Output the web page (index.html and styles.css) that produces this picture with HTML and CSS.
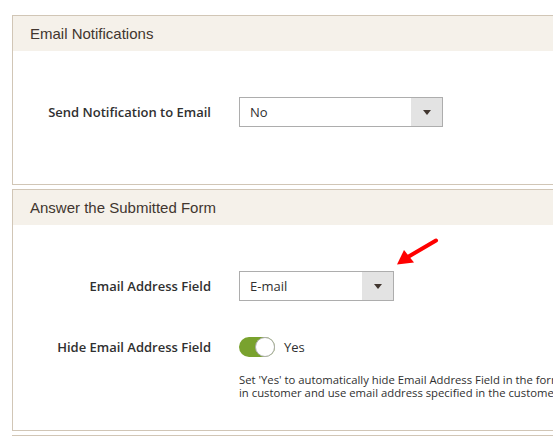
FILE: index.html
```html
<!DOCTYPE html>
<html>
<head>
<meta charset="utf-8">
<link rel="stylesheet" href="styles.css">
</head>
<body>
<div class="page">
  <section class="panel">
    <div class="panel-head">Email Notifications</div>
    <div class="panel-body body-1">
      <div class="row">
        <div class="label">Send Notification to Email</div>
        <div class="control">
          <div class="select wide"><span class="select-value">No</span><span class="select-btn"><span class="caret"></span></span></div>
        </div>
      </div>
    </div>
  </section>
  <section class="panel">
    <div class="panel-head">Answer the Submitted Form</div>
    <div class="panel-body body-2">
      <div class="row">
        <div class="label">Email Address Field</div>
        <div class="control">
          <div class="select narrow"><span class="select-value">E-mail</span><span class="select-btn"><span class="caret"></span></span></div>
        </div>
      </div>
      <div class="row row-toggle">
        <div class="label">Hide Email Address Field</div>
        <div class="control">
          <div class="toggle-wrap"><span class="toggle"><span class="knob"></span></span><span class="toggle-text">Yes</span></div>
        </div>
      </div>
      <div class="row row-note">
        <div class="label"></div>
        <div class="note">Set 'Yes' to automatically hide Email Address Field in the form for logged<br>in customer and use email address specified in the customer account.</div>
      </div>
    </div>
  </section>
  <section class="panel panel-last">
    <div class="panel-head"></div>
  </section>
</div>
<svg class="arrow" width="60" height="40" viewBox="390 230 60 40">
  <line x1="436" y1="240.5" x2="407" y2="257.5" stroke="#ff0000" stroke-width="4" stroke-linecap="round"/>
  <polygon points="397,264.5 404,250 414,262.5" fill="#ff0000"/>
</svg>
</body>
</html>
```
FILE: styles.css
```css
html, body {
  margin: 0;
  padding: 0;
  background: #ffffff;
  overflow: hidden;
}
body {
  width: 553px;
  height: 436px;
  position: relative;
  font-family: "Open Sans", "Liberation Sans", sans-serif;
  color: #303030;
}
.page {
  padding: 15px 0 0 12px;
  width: 760px;
}
.panel {
  border: 1px solid #d1c6b6;
  border-right: none;
  margin-bottom: 4px;
}
.panel-head {
  height: 35px;
  background: #f5f1ea;
  font-family: "Liberation Sans", Arial, sans-serif;
  font-size: 15px;
  line-height: 36px;
  color: #41362f;
  padding-left: 17px;
}
.panel-body {
  background: #fff;
}
.body-1 {
  padding: 46px 0 57px;
}
.body-2 {
  padding: 46px 0 27px;
}
.row {
  display: grid;
  grid-template-columns: 198px auto;
  column-gap: 28px;
  align-items: center;
  min-height: 30px;
}
.row-toggle {
  margin-top: 31px;
}
.row-note {
  margin-top: 11px;
  align-items: start;
}
.label {
  text-align: right;
  font-size: 13px;
  font-weight: 600;
  color: #303030;
  line-height: 30px;
}
.row-toggle .label {
  line-height: 29px;
}
.select {
  box-sizing: border-box;
  height: 30px;
  border: 1px solid #adadad;
  display: flex;
  background: #fff;
}
.select.wide { width: 204px; }
.select.narrow { width: 155px; }
.select-value {
  flex: 1;
  font-size: 13px;
  line-height: 29px;
  padding-left: 10px;
  color: #303030;
}
.select-btn {
  width: 31px;
  background: #e3e3e3;
  display: flex;
  align-items: center;
  justify-content: center;
}
.caret {
  width: 0;
  height: 0;
  border-left: 4.5px solid transparent;
  border-right: 4.5px solid transparent;
  border-top: 5px solid #41362f;
  margin-top: 1px;
}
.toggle-wrap {
  display: flex;
  align-items: center;
}
.toggle {
  box-sizing: border-box;
  width: 36px;
  height: 20px;
  border-radius: 10px;
  background: #79a22e;
  position: relative;
  display: block;
}
.knob {
  position: absolute;
  right: 0;
  top: 0;
  box-sizing: border-box;
  width: 20px;
  height: 20px;
  border-radius: 50%;
  background: #fff;
  border: 1px solid #adadad;
}
.toggle-text {
  margin-left: 9px;
  font-size: 13px;
  color: #303030;
}
.note {
  font-size: 11.3px;
  line-height: 13px;
  color: #303030;
  white-space: nowrap;
}
.panel-last .panel-head {
  height: 20px;
}
.arrow {
  position: absolute;
  left: 390px;
  top: 230px;
}
```
